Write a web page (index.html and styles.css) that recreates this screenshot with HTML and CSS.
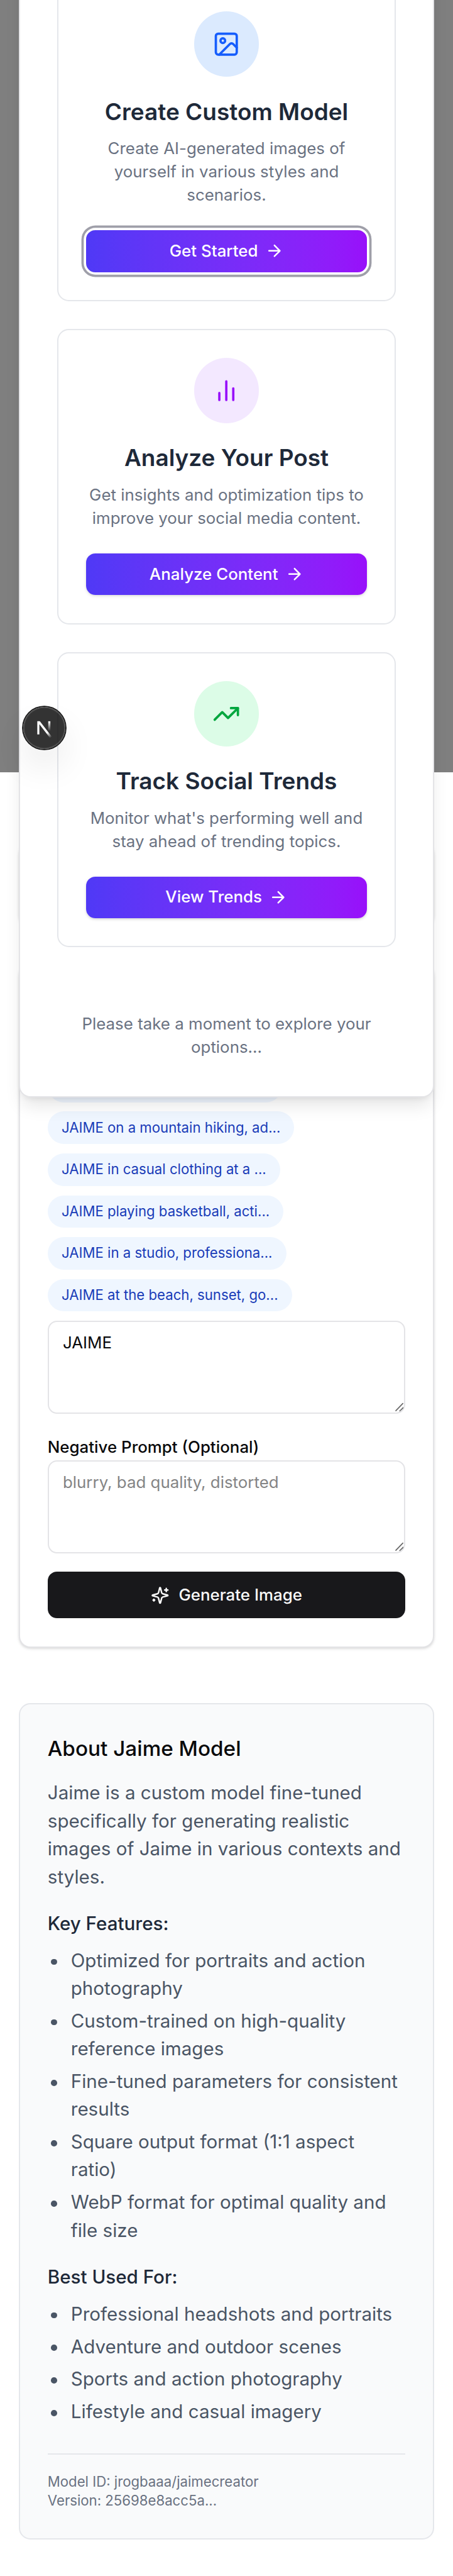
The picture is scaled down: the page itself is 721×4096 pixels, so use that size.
FILE: index.html
```html
<!DOCTYPE html>
<html lang="en">
<head>
<meta charset="utf-8">
<title>Jaime Creator</title>
<link rel="stylesheet" href="styles.css">
</head>
<body>
<main class="page">
  <div class="panel panel-small"></div>
  <section class="panel form-card">
    <div class="chips">
      <span class="chip chip-covered"></span>
      <button class="chip">JAIME on a mountain hiking, ad...</button>
      <button class="chip">JAIME in casual clothing at a ...</button>
      <button class="chip">JAIME playing basketball, acti...</button>
      <button class="chip">JAIME in a studio, professiona...</button>
      <button class="chip">JAIME at the beach, sunset, go...</button>
    </div>
    <div class="field">
      <textarea class="textarea">JAIME</textarea>
      <svg class="grip" viewBox="0 0 8 8"><path d="M1.1 7.1 7.1.9M4.5 7.3 7.5 4.4"/></svg>
    </div>
    <label class="label" for="negative">Negative Prompt (Optional)</label>
    <div class="field">
      <textarea class="textarea" id="negative" placeholder="blurry, bad quality, distorted"></textarea>
      <svg class="grip" viewBox="0 0 8 8"><path d="M1.1 7.1 7.1.9M4.5 7.3 7.5 4.4"/></svg>
    </div>
    <button class="generate">
      <svg class="icon icon-sm" viewBox="0 0 24 24"><path d="M9.937 15.5A2 2 0 0 0 8.5 14.063l-6.135-1.582a.5.5 0 0 1 0-.962L8.5 9.936A2 2 0 0 0 9.937 8.5l1.582-6.135a.5.5 0 0 1 .963 0L14.063 8.5A2 2 0 0 0 15.5 9.937l6.135 1.581a.5.5 0 0 1 0 .964L15.5 14.063a2 2 0 0 0-1.437 1.437l-1.582 6.135a.5.5 0 0 1-.963 0z"/><path d="M20 3v4M22 5h-4M4 17v2M5 18H3"/></svg>
      <span>Generate Image</span>
    </button>
  </section>

  <section class="about">
    <h3 class="about-title">About Jaime Model</h3>
    <p class="about-text">Jaime is a custom model fine-tuned specifically for generating realistic images of Jaime in various contexts and styles.</p>
    <h4 class="about-sub">Key Features:</h4>
    <ul class="list">
      <li>Optimized for portraits and action photography</li>
      <li>Custom-trained on high-quality reference images</li>
      <li>Fine-tuned parameters for consistent results</li>
      <li>Square output format (1:1 aspect ratio)</li>
      <li>WebP format for optimal quality and file size</li>
    </ul>
    <h4 class="about-sub">Best Used For:</h4>
    <ul class="list">
      <li>Professional headshots and portraits</li>
      <li>Adventure and outdoor scenes</li>
      <li>Sports and action photography</li>
      <li>Lifestyle and casual imagery</li>
    </ul>
    <div class="meta">
      <p>Model ID: jrogbaaa/jaimecreator</p>
      <p>Version: 25698e8acc5a...</p>
    </div>
  </section>
</main>

<div class="overlay"></div>
<div class="modal">
  <div class="options">
    <article class="option">
      <div class="bubble bubble-blue">
        <svg class="icon" viewBox="0 0 24 24"><rect width="18" height="18" x="3" y="3" rx="2"/><circle cx="9" cy="9" r="2"/><path d="m21 15-3.086-3.086a2 2 0 0 0-2.828 0L6 21"/></svg>
      </div>
      <h3 class="option-title">Create Custom Model</h3>
      <p class="option-text">Create AI-generated images of yourself in various styles and scenarios.</p>
      <button class="cta cta-focused"><span>Get Started</span><svg class="icon icon-sm" viewBox="0 0 24 24"><path d="M5 12h14M12 5l7 7-7 7"/></svg></button>
    </article>
    <article class="option">
      <div class="bubble bubble-purple">
        <svg class="icon" viewBox="0 0 24 24"><path d="M18 20V10M12 20V4M6 20v-6"/></svg>
      </div>
      <h3 class="option-title">Analyze Your Post</h3>
      <p class="option-text">Get insights and optimization tips to improve your social media content.</p>
      <button class="cta"><span>Analyze Content</span><svg class="icon icon-sm" viewBox="0 0 24 24"><path d="M5 12h14M12 5l7 7-7 7"/></svg></button>
    </article>
    <article class="option">
      <div class="bubble bubble-green">
        <svg class="icon" viewBox="0 0 24 24"><path d="M22 7 13.5 15.5 8.5 10.5 2 17"/><path d="M16 7h6v6"/></svg>
      </div>
      <h3 class="option-title">Track Social Trends</h3>
      <p class="option-text">Monitor what's performing well and stay ahead of trending topics.</p>
      <button class="cta"><span>View Trends</span><svg class="icon icon-sm" viewBox="0 0 24 24"><path d="M5 12h14M12 5l7 7-7 7"/></svg></button>
    </article>
  </div>
  <p class="modal-note">Please take a moment to explore your options...</p>
</div>

<div class="dev-badge">
  <svg class="dev-logo" viewBox="0 0 36 36">
    <defs>
      <linearGradient id="diag" gradientUnits="userSpaceOnUse" x1="9.956" y1="11.123" x2="15.478" y2="17.967"><stop stop-color="#fff"/><stop offset=".604" stop-color="#fff" stop-opacity="0"/></linearGradient>
      <linearGradient id="leg" gradientUnits="userSpaceOnUse" x1="11.822" y1="1.4" x2="11.791" y2="9.625"><stop stop-color="#fff"/><stop offset="1" stop-color="#fff" stop-opacity="0"/></linearGradient>
      <clipPath id="trim"><rect x="1.41" y="1.25" width="15" height="16"/></clipPath>
    </defs>
    <g transform="translate(10.6 11.1)" fill="none" stroke-width="1.86">
      <path d="M13.3 15.2 2.34 1v11.6" stroke="url(#diag)" clip-path="url(#trim)"/>
      <path d="M11.825 1.25v11.6" stroke="url(#leg)"/>
    </g>
  </svg>
</div>
</body>
</html>
```
FILE: styles.css
```css
*, *::before, *::after { box-sizing: border-box; margin: 0; padding: 0; }

/* 1rem stands for ten layout units */
html { font-size: 18.487px; }

body {
  position: relative;
  height: 4096px;
  overflow: hidden;
  background: #fff;
  color: #09090b;
  font-family: Inter, "Liberation Sans", sans-serif;
  font-size: 1.6rem;
  line-height: 2.4rem;
}

button, textarea { font: inherit; border: 0; }

.icon {
  width: 2.4rem;
  height: 2.4rem;
  flex: none;
  fill: none;
  stroke: currentColor;
  stroke-width: 2;
  stroke-linecap: round;
  stroke-linejoin: round;
}
.icon-sm { width: 1.6rem; height: 1.6rem; }

.page {
  display: flex;
  flex-direction: column;
  padding: 72.5rem 1.6rem 3.2rem;
}

.panel {
  border: 2px solid #e4e4e7;
  border-radius: 1rem;
  background: #fff;
  box-shadow: 0 .1rem .3rem rgba(0,0,0,.1), 0 .1rem .2rem -.1rem rgba(0,0,0,.1);
}
.panel-small { height: 7.2rem; margin-bottom: 3.2rem; }

.form-card {
  display: flex;
  flex-direction: column;
  justify-content: flex-end;
  height: 58.8rem;
  padding: calc(2.5rem - 2px);
}

.chips {
  display: flex;
  flex-direction: column;
  align-items: flex-start;
  gap: .8rem;
  margin-bottom: .8rem;
}
.chip {
  height: 2.8rem;
  padding: .6rem 1.2rem;
  border-radius: 1.4rem;
  background: #eff6ff;
  color: #193cb8;
  font-size: 1.2rem;
  line-height: 1.6rem;
  white-space: nowrap;
}
.chip-covered { width: 20.2rem; }

.field { position: relative; height: 8rem; }
.textarea {
  display: block;
  width: 100%;
  height: 100%;
  padding: .8rem 1.2rem;
  border: 2px solid #e4e4e7;
  border-radius: .8rem;
  background: transparent;
  color: #09090b;
  font-size: 1.4rem;
  line-height: 2rem;
  resize: none;
  overflow: hidden;
}
.textarea::placeholder { color: #848485; opacity: 1; }
.grip {
  position: absolute;
  right: .15rem;
  bottom: .15rem;
  width: .8rem;
  height: .8rem;
  fill: none;
  stroke: #666;
  stroke-width: .9;
  stroke-linecap: round;
}
.label {
  margin-top: 1.9rem;
  margin-bottom: .1rem;
  font-size: 1.4rem;
  font-weight: 500;
  line-height: 2rem;
}

.generate {
  display: flex;
  align-items: center;
  justify-content: center;
  gap: .8rem;
  height: 4rem;
  margin-top: 1.6rem;
  border-radius: .8rem;
  background: #18181b;
  color: #fafafa;
  font-size: 1.4rem;
  font-weight: 500;
  line-height: 2rem;
}

.about {
  height: 71.9rem;
  margin-top: 4.8rem;
  padding: calc(2.5rem - 2px);
  border: 2px solid #e5e7eb;
  border-radius: 1rem;
  background: #f9fafb;
}
.about-title { font-size: 1.8rem; font-weight: 500; line-height: 2.8rem; }
.about-text { margin-top: 1.2rem; color: #4a5565; }
.about-sub {
  margin: 1.6rem 0 .8rem;
  color: #1e2939;
  font-size: 1.6rem;
  font-weight: 500;
}
.list {
  display: flex;
  flex-direction: column;
  gap: .4rem;
  padding-right: .4rem;
  color: #4a5565;
  list-style: none;
}
.list li { display: grid; grid-template-columns: 2rem 1fr; }
.list li::before {
  content: "";
  width: .52rem;
  height: .52rem;
  margin: 1.08rem 0 0 .28rem;
  border-radius: 50%;
  background: currentColor;
}
.meta {
  margin-top: 2.4rem;
  padding-top: 1.6rem;
  border-top: 2px solid #e5e7eb;
  color: #6a7282;
  font-size: 1.2rem;
  line-height: 1.6rem;
}

.overlay {
  position: absolute;
  inset: 0 0 auto;
  height: 66.4rem;
  background: rgba(0,0,0,.5);
}

.modal {
  position: absolute;
  top: -4.8rem;
  left: 1.6rem;
  right: 1.6rem;
  height: 99.2rem;
  padding: calc(3.3rem - 2px);
  border: 2px solid #e4e4e7;
  border-radius: 1rem;
  background: #fff;
  box-shadow: 0 1rem 1.5rem -.3rem rgba(0,0,0,.1), 0 .4rem .6rem -.4rem rgba(0,0,0,.1);
}
.options { display: flex; flex-direction: column; gap: 2.4rem; }
.option {
  display: flex;
  flex-direction: column;
  align-items: center;
  padding: calc(2.5rem - 2px);
  border: 2px solid #e5e7eb;
  border-radius: 1rem;
  text-align: center;
}
.bubble {
  display: flex;
  align-items: center;
  justify-content: center;
  width: 5.6rem;
  height: 5.6rem;
  border-radius: 50%;
}
.bubble-blue { background: #dbeafe; color: #155dfc; }
.bubble-purple { background: #f3e8ff; color: #9810fa; }
.bubble-green { background: #dcfce7; color: #00a63e; }
.option-title {
  margin: 1.6rem 0 .8rem;
  color: #1e2939;
  font-size: 2rem;
  font-weight: 600;
  line-height: 2.8rem;
}
.option-text, .modal-note {
  color: #6a7282;
  font-size: 1.4rem;
  line-height: 2rem;
  text-align: center;
}
.modal-note { margin-top: 5.6rem; }
.cta {
  display: flex;
  align-items: center;
  justify-content: center;
  gap: .6rem;
  width: 100%;
  height: 3.6rem;
  margin-top: 2rem;
  border-radius: .8rem;
  background: linear-gradient(to right in oklab, #4f39f6, #9810fa);
  box-shadow: 0 .1rem .3rem rgba(0,0,0,.1), 0 .1rem .2rem -.1rem rgba(0,0,0,.1);
  color: #fff;
  font-size: 1.4rem;
  font-weight: 500;
  line-height: 2rem;
}
.cta-focused { box-shadow: 0 0 0 .2rem #fff, 0 0 0 .4rem #9f9fa9; }

.dev-badge {
  position: absolute;
  top: 60.8rem;
  left: 2rem;
  width: 3.6rem;
  height: 3.6rem;
  border-radius: 50%;
  background: rgba(0,0,0,.8);
  box-shadow: 0 0 0 .1rem #171717, inset 0 0 0 .1rem rgba(255,255,255,.14), 0 1.6rem 3.2rem -.8rem rgba(0,0,0,.24);
}
.dev-logo { display: block; width: 100%; height: 100%; }
```
